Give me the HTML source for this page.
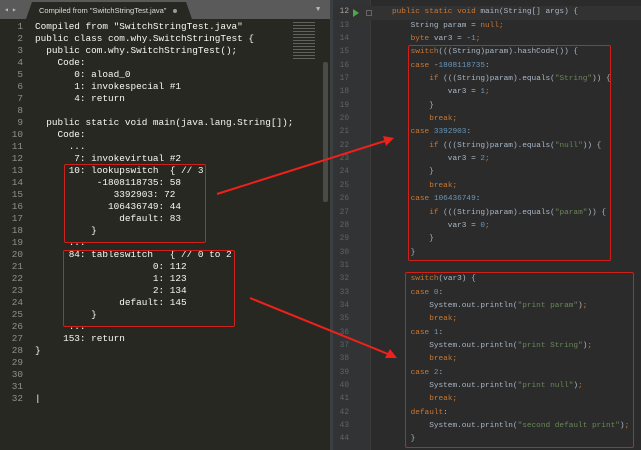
<!DOCTYPE html>
<html><head><meta charset="utf-8"><style>
*{margin:0;padding:0;box-sizing:border-box}
body{width:641px;height:450px;overflow:hidden;background:#2b2b2b;position:relative;font-family:"Liberation Mono",monospace}
#left{position:absolute;left:0;top:0;width:330px;height:450px;background:#272822}
#tabbar{position:absolute;left:0;top:0;width:330px;height:19px;background:#5a5a5a}
#tab{position:absolute;left:26px;top:2px;width:166px;height:17px;background:#272822;clip-path:polygon(6px 0,160px 0,166px 17px,0 17px);font-family:"Liberation Sans",sans-serif;font-size:7.5px;color:#ddd;line-height:17px;padding-left:13px}
#tab span{position:absolute;left:147px;top:7px;width:4px;height:4px;border-radius:2px;background:#999}
.nav{position:absolute;top:5px;color:#bbb;font-size:8px}
#lnum{position:absolute;left:0;top:21px;width:23px;text-align:right;color:#8f908a;font-size:9.4px;line-height:12px;white-space:pre}
#lcode{position:absolute;left:35px;top:21px;color:#f8f8f2;font-size:9.4px;line-height:12px;white-space:pre;letter-spacing:-0.01px}
#sb{position:absolute;left:323px;top:62px;width:5px;height:140px;background:#4a4a46;border-radius:2px}
#right{position:absolute;left:330px;top:0;width:311px;height:450px}
#gut{position:absolute;left:0;top:0;width:40px;height:450px;background:#313335;border-left:3px solid #3c3f41}
#sep{position:absolute;left:40px;top:0;width:1px;height:450px;background:#3a3a3a}
#rnum{position:absolute;left:0;top:-7px;width:19px;text-align:right;color:#606366;font-size:7.8px;line-height:13.34px;white-space:pre}
#rcode{position:absolute;left:62px;top:-7px;color:#a9b7c6;font-size:7.75px;line-height:13.34px;white-space:pre}
.k{color:#cc7832}.n{color:#6897bb}.s{color:#6a8759}
.box{position:absolute;border:1px solid #d0201a;border-radius:2px}
</style></head><body>
<div id="left">
<div id="tabbar"><div class="nav" style="left:4px">◂</div><div class="nav" style="left:12px">▸</div>
<div id="tab">Compiled from "SwitchStringTest.java"<span></span></div>
<div class="nav" style="left:316px;top:6px;font-size:7px">▼</div></div>
<div id="lnum">1
2
3
4
5
6
7
8
9
10
11
12
13
14
15
16
17
18
19
20
21
22
23
24
25
26
27
28
29
30
31
32</div>
<div id="lcode">Compiled from "SwitchStringTest.java"
public class com.why.SwitchStringTest {
  public com.why.SwitchStringTest();
    Code:
       0: aload_0
       1: invokespecial #1
       4: return

  public static void main(java.lang.String[]);
    Code:
      ...
       7: invokevirtual #2
      10: lookupswitch  { // 3
           -1808118735: 58
              3392903: 72
             106436749: 44
               default: 83
          }
      ...
      84: tableswitch   { // 0 to 2
                     0: 112
                     1: 123
                     2: 134
               default: 145
          }
      ...
     153: return
}



|</div>
<div id="sb"></div>
<div style="position:absolute;left:293px;top:22px;width:22px;height:38px;opacity:.35;background:repeating-linear-gradient(#ccc 0 1px,transparent 1px 3px)"></div>
<div class="box" style="left:64px;top:164px;width:142px;height:79px"></div>
<div class="box" style="left:63px;top:250px;width:172px;height:77px"></div>
</div>
<div id="right">
<div id="gut"></div><div id="sep"></div>
<div style="position:absolute;left:3px;top:6px;width:308px;height:14px;background:#323232"></div>
<div id="rnum">11
<span style="color:#a4a3a3">12</span>
13
14
15
16
17
18
19
20
21
22
23
24
25
26
27
28
29
30
31
32
33
34
35
36
37
38
39
40
41
42
43
44</div>
<div style="position:absolute;left:23px;top:9px;width:0;height:0;border-left:6px solid #4aa84a;border-top:4px solid transparent;border-bottom:4px solid transparent"></div>
<div style="position:absolute;left:36px;top:10px;width:6px;height:6px;border:1px solid #666"></div>
<div id="rcode">
<span class="k">public static void</span> main(String[] args) {
    String param = <span class="k">null;</span>
    <span class="k">byte</span> var3 = -<span class="n">1</span><span class="k">;</span>
    <span class="k">switch</span>(((String)param).hashCode()) {
    <span class="k">case</span> -<span class="n">1808118735</span>:
        <span class="k">if</span> (((String)param).equals(<span class="s">"String"</span>)) {
            var3 = <span class="n">1</span><span class="k">;</span>
        }
        <span class="k">break;</span>
    <span class="k">case</span> <span class="n">3392903</span>:
        <span class="k">if</span> (((String)param).equals(<span class="s">"null"</span>)) {
            var3 = <span class="n">2</span><span class="k">;</span>
        }
        <span class="k">break;</span>
    <span class="k">case</span> <span class="n">106436749</span>:
        <span class="k">if</span> (((String)param).equals(<span class="s">"param"</span>)) {
            var3 = <span class="n">0</span><span class="k">;</span>
        }
    }

    <span class="k">switch</span>(var3) {
    <span class="k">case</span> <span class="n">0</span>:
        System.out.println(<span class="s">"print param"</span>)<span class="k">;</span>
        <span class="k">break;</span>
    <span class="k">case</span> <span class="n">1</span>:
        System.out.println(<span class="s">"print String"</span>)<span class="k">;</span>
        <span class="k">break;</span>
    <span class="k">case</span> <span class="n">2</span>:
        System.out.println(<span class="s">"print null"</span>)<span class="k">;</span>
        <span class="k">break;</span>
    <span class="k">default</span>:
        System.out.println(<span class="s">"second default print"</span>)<span class="k">;</span>
    }</div>
<div class="box" style="left:78px;top:45px;width:203px;height:216px"></div>
<div class="box" style="left:75px;top:272px;width:229px;height:176px"></div>
</div>
<svg style="position:absolute;left:0;top:0" width="641" height="450">
<g fill="#f0201a" stroke="#f0201a">
<line x1="217" y1="194" x2="385" y2="141" stroke-width="2"/>
<polygon points="394,138 383,136 386,146" stroke="none"/>
<line x1="250" y1="298" x2="388" y2="354" stroke-width="2"/>
<polygon points="397,358 390,349 385,358" stroke="none"/>
</g></svg>
</body></html>
